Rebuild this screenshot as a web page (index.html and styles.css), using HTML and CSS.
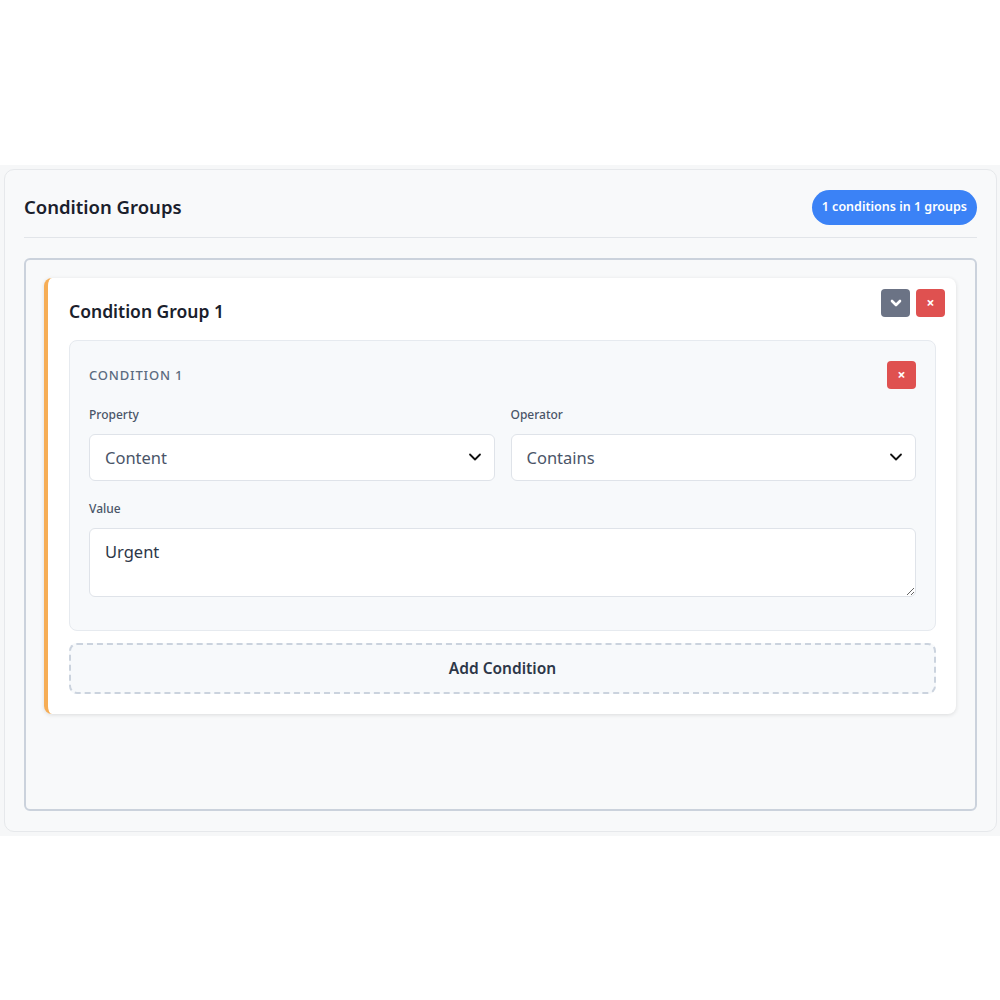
FILE: index.html
```html
<!DOCTYPE html>
<html>
<head>
<meta charset="utf-8">
<link rel="stylesheet" href="styles.css">
</head>
<body>
<div class="wrap">
  <div class="panel">
    <div class="panel-header">
      <h2 class="panel-title">Condition Groups</h2>
      <span class="badge">1 conditions in 1 groups</span>
    </div>
    <div class="groups">
      <div class="group">
        <div class="group-actions">
          <button class="btn-icon btn-grey" type="button">
            <svg width="12" height="12" viewBox="0 0 12 12"><path d="M2 4 L6 8 L10 4" fill="none" stroke="#fff" stroke-width="2.6" stroke-linecap="round" stroke-linejoin="round"/></svg>
          </button>
          <button class="btn-icon btn-red" type="button">×</button>
        </div>
        <h3 class="group-title">Condition Group 1</h3>
        <div class="condition">
          <div class="condition-head">
            <span class="condition-title">Condition 1</span>
            <button class="btn-icon btn-red" type="button">×</button>
          </div>
          <div class="row">
            <div class="field">
              <label class="label">Property</label>
              <div class="select-wrap">
                <select class="select"><option>Content</option></select>
                <svg class="chev" width="14" height="10" viewBox="0 0 14 10"><path d="M2 2.5 L7 7.5 L12 2.5" fill="none" stroke="#111" stroke-width="1.8" stroke-linecap="round" stroke-linejoin="round"/></svg>
              </div>
            </div>
            <div class="field">
              <label class="label">Operator</label>
              <div class="select-wrap">
                <select class="select"><option>Contains</option></select>
                <svg class="chev" width="14" height="10" viewBox="0 0 14 10"><path d="M2 2.5 L7 7.5 L12 2.5" fill="none" stroke="#111" stroke-width="1.8" stroke-linecap="round" stroke-linejoin="round"/></svg>
              </div>
            </div>
          </div>
          <div class="field field-last">
            <label class="label">Value</label>
            <textarea class="textarea">Urgent</textarea>
          </div>
        </div>
        <button class="add-btn" type="button">Add Condition</button>
      </div>
    </div>
  </div>
</div>
</body>
</html>
```
FILE: styles.css
```css
* { box-sizing: border-box; }
html, body { margin: 0; padding: 0; background: #fff; }
body {
  font-family: "Noto Sans", "Open Sans", sans-serif;
  min-height: 1000px;
  display: flex;
  align-items: center;
}
.wrap {
  width: 100%;
  background: #f6f7f8;
  padding: 4px 3px 4px 4px;
}
.panel {
  background: #f8f9fa;
  border: 1px solid #e6e8eb;
  border-radius: 10px;
  padding: 0 19px 20px 19px;
}
.panel-header {
  display: flex;
  justify-content: space-between;
  align-items: center;
  padding: 20px 0 12px;
  border-bottom: 1px solid #e2e5e9;
  margin-bottom: 20px;
}
.panel-title {
  margin: 0;
  font-size: 18.5px;
  font-weight: 600;
  color: #1a202c;
  position: relative;
  top: -1px;
}
.badge {
  background: #3b82f6;
  color: #fff;
  font-size: 12.5px;
  font-weight: 600;
  padding: 7px 10px 8px;
  border-radius: 18px;
  line-height: 20px;
}
.groups {
  border: 2px solid #cbd2dc;
  border-radius: 6px;
  padding: 18px 19px 18px 18px;
  min-height: 553px;
}
.group {
  position: relative;
  background: #fff;
  border-left: 4px solid #f6ad55;
  border-radius: 8px;
  padding: 19px 20px 20px 21px;
  box-shadow: 0 1px 4px rgba(0,0,0,0.12);
}
.group-actions {
  position: absolute;
  top: 11px;
  right: 11px;
  display: flex;
  gap: 6px;
}
.btn-icon {
  width: 29px;
  height: 28px;
  border: none;
  border-radius: 4px;
  color: #fff;
  font-size: 14px;
  font-weight: 700;
  font-family: "Noto Sans", sans-serif;
  display: flex;
  align-items: center;
  justify-content: center;
  padding: 0;
  line-height: 1;
}
.btn-grey { background: #6b7385; }
.btn-red { background: #df5150; }
.group-title {
  margin: 0 0 15px;
  font-size: 17.5px;
  font-weight: 600;
  color: #1a202c;
  line-height: 28px;
}
.condition {
  background: #f7f9fb;
  border: 1px solid #e6eaef;
  border-radius: 8px;
  padding: 20px 19px 19px 19px;
}
.condition-head {
  display: flex;
  justify-content: space-between;
  align-items: center;
  margin-bottom: 17px;
}
.condition-title {
  text-transform: uppercase;
  font-size: 13px;
  font-weight: 500;
  letter-spacing: 0.8px;
  color: #5b6b80;
}
.row {
  display: flex;
  gap: 16px;
}
.field {
  flex: 1;
  display: flex;
  flex-direction: column;
  margin-bottom: 19px;
}
.field-last { margin-bottom: 14px; }
.label {
  font-size: 12px;
  font-weight: 500;
  color: #4a5568;
  line-height: 18px;
  margin-bottom: 10px;
}
.select-wrap { position: relative; }
.select {
  width: 100%;
  height: 47px;
  appearance: none;
  -webkit-appearance: none;
  background: #fff;
  border: 1px solid #dfe3e9;
  border-radius: 6px;
  padding: 0 15px;
  font-family: "Noto Sans", sans-serif;
  font-size: 16.5px;
  color: #4a5568;
}
.chev {
  position: absolute;
  right: 13px;
  top: 18px;
  pointer-events: none;
}
.textarea {
  width: 100%;
  height: 69px;
  border: 1px solid #dfe3e9;
  border-radius: 6px;
  padding: 11px 15px;
  font-family: "Noto Sans", sans-serif;
  font-size: 16.5px;
  color: #2d3748;
  background: #fff;
  resize: vertical;
}
.add-btn {
  display: block;
  width: 100%;
  margin-top: 12px;
  height: 51px;
  background: #f7f9fb;
  border: 2px dashed #cbd3de;
  border-radius: 8px;
  font-family: "Noto Sans", sans-serif;
  font-size: 15.5px;
  font-weight: 600;
  color: #2d3748;
}
```
